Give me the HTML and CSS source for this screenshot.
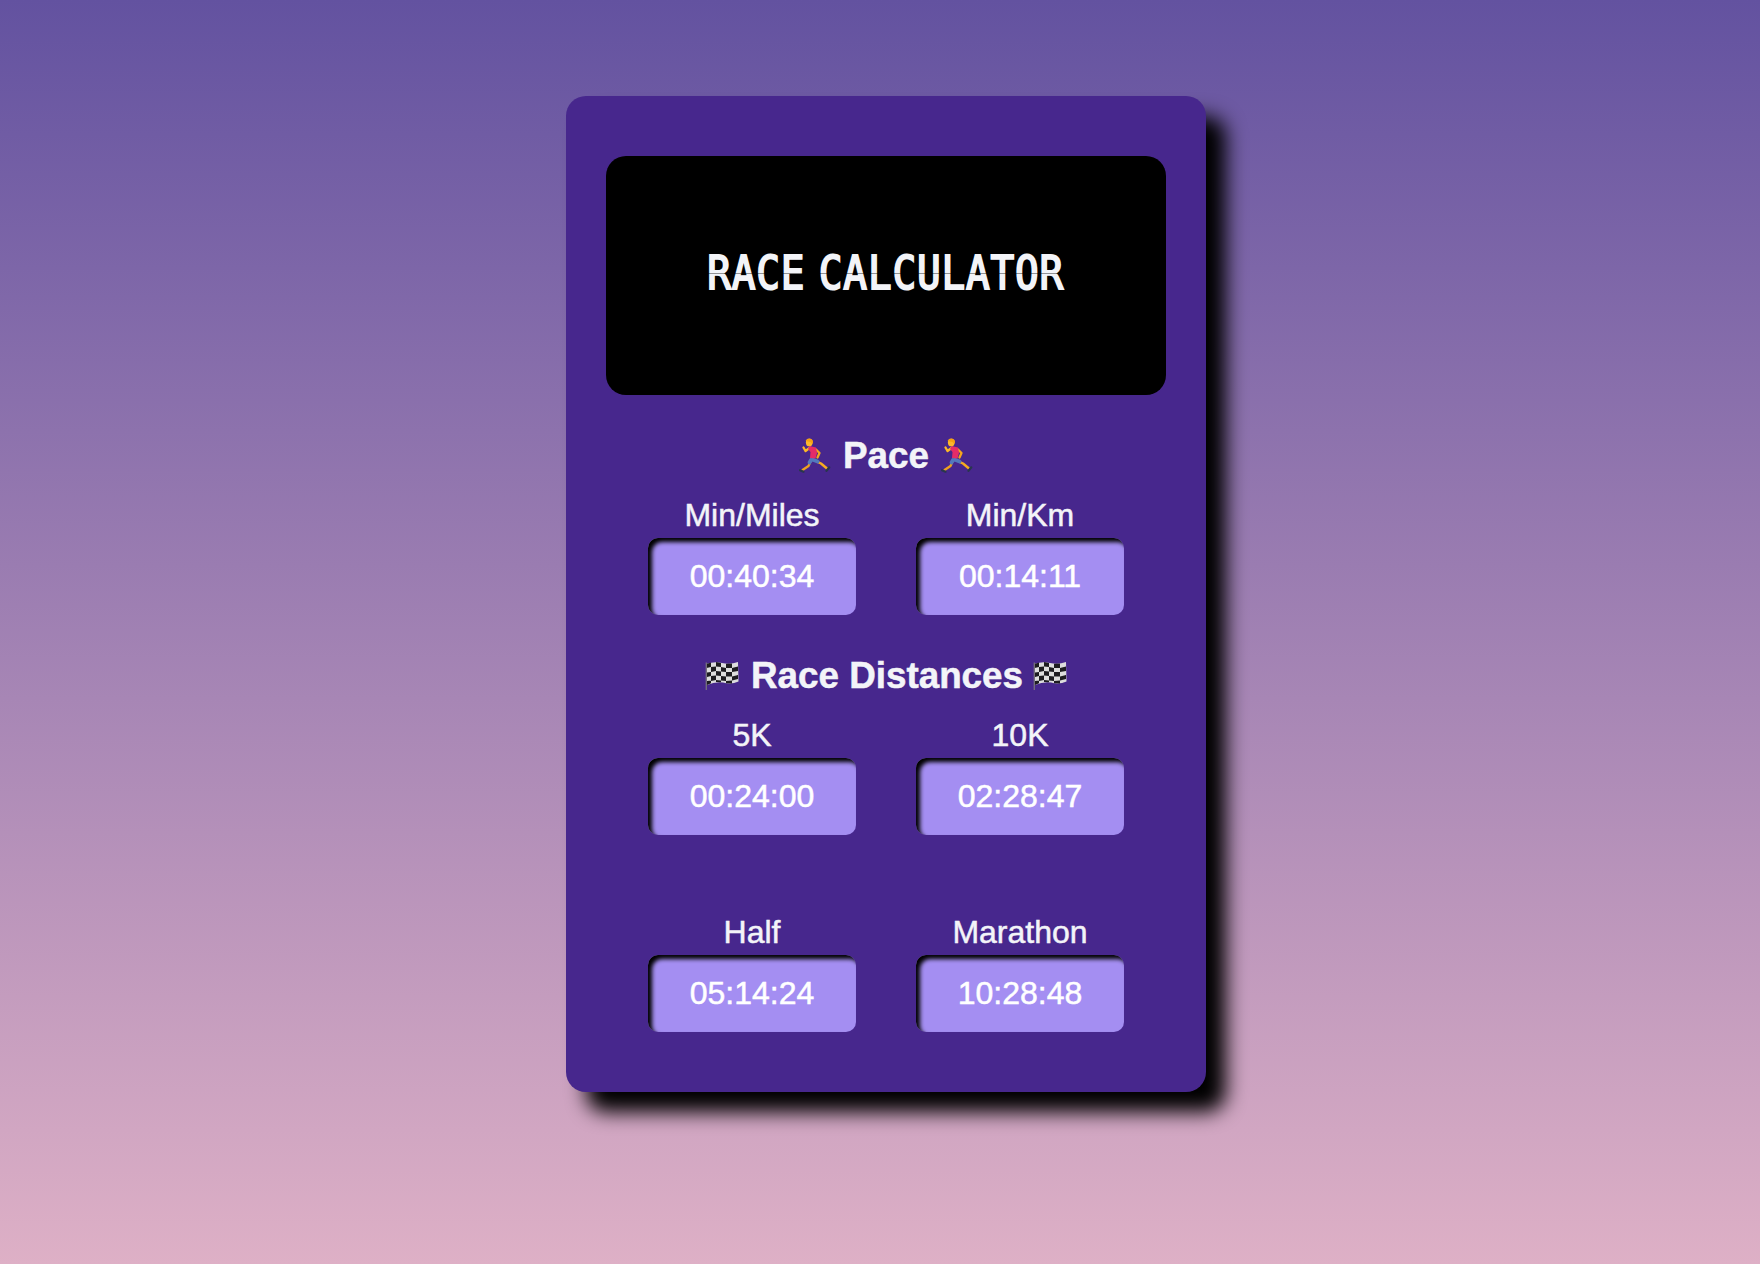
FILE: index.html
```html
<!DOCTYPE html>
<html lang="en">
<head>
<meta charset="utf-8">
<title>Race Calculator</title>
<link rel="stylesheet" href="styles.css">
</head>
<body>
<svg class="symbols" aria-hidden="true">
  <symbol id="runner" viewBox="0 0 32 36">
    <g fill="none" stroke-linecap="round" stroke-linejoin="round">
      <path d="M17 11.500L20.500 15L18.500 19.500" stroke="#f5a51d" stroke-width="2.300"/>
      <path d="M11.500 23.500L9.500 28L3.500 32" stroke="#efa11e" stroke-width="2.300"/>
      <path d="M18 23.700L22 25.500L28 30.500" stroke="#f6ac20" stroke-width="2.400"/>
      <path d="M12 22L10.500 24.500M14 21.800L18.500 23.500" stroke="#5378bd" stroke-width="3.800"/>
      <path d="M10.500 10L6.500 13L4.500 9.500" stroke="#fbb827" stroke-width="2.300"/>
      <path d="M1 32.200L4.500 33.700M27.500 32.800L30.300 29.300" stroke="#29364d" stroke-width="2.200"/>
    </g>
    <path d="M10.500 8L17 9.500L18 15L16.500 20.500L11 20L11.500 14L9 11Z" fill="#e52c68"/>
    <ellipse cx="10.200" cy="4.400" rx="3.300" ry="3.900" fill="#fcb72b"/>
    <path d="M6.500 3Q8 .300 12 1Q15 2 13.500 6L11.500 4Z" fill="#f5a112"/>
  </symbol>
  <symbol id="flag" viewBox="0 0 34 30">
    <path d="M1.500 3Q9 0 17 2Q25 4 33 1L33.500 20.500Q26 24 18 21.500Q10 20.500 2 24Z" fill="#ddd"/>
    <path d="M1.500 3L6 1.500V6L1.500 7ZM11 1L16 2V6L11 5.500ZM21 2.700L27 2.500V7L21 7ZM6 6L11 5.500V10L6 11ZM16 6L21 7V11L16 10.500ZM27 7L33 5.500V10L27 11ZM2 11.500L6 11V15L2 16ZM11 10L16 10.500V15L11 14.500ZM21 11L27 11V15.500L21 15.500ZM6 15L11 14.500V19L6 20ZM16 15L21 15.500V20L16 19.500ZM27 15.500L33 14V18L27 19.500ZM2 20L6 19.500V22.300L2 24ZM11 19L16 19.500V21.200L11 20.900ZM21 20L27 19.500V22.500L21 22.200Z" fill="#1d1c20"/>
    <path d="M1.300 1.500V29" stroke="#77717d" stroke-width="1.300"/>
  </symbol>
</svg>
<main class="calculator">
  <header class="screen"><h1 class="title">RACE CALCULATOR</h1></header>
  <h2 class="heading"><svg class="runner"><use href="#runner"/></svg><span>Pace</span><svg class="runner"><use href="#runner"/></svg></h2>
  <section class="row">
    <label class="field">Min/Miles<input class="time" value="00:40:34"></label>
    <label class="field">Min/Km<input class="time" value="00:14:11"></label>
  </section>
  <h2 class="heading"><svg class="flag"><use href="#flag"/></svg><span>Race Distances</span><svg class="flag"><use href="#flag"/></svg></h2>
  <section class="row">
    <label class="field">5K<input class="time" value="00:24:00"></label>
    <label class="field">10K<input class="time" value="02:28:47"></label>
  </section>
  <section class="row row-long">
    <label class="field">Half<input class="time" value="05:14:24"></label>
    <label class="field">Marathon<input class="time" value="10:28:48"></label>
  </section>
</main>
</body>
</html>
```
FILE: styles.css
```css
* { box-sizing: border-box; }
html { height: 100%; }
body {
  margin: 0;
  min-height: 100%;
  padding-top: 96px;
  padding-left: 12px;
  background: linear-gradient(#6352a0, #deb0c6);
  color: #f3f4f8;
  font: 32px/38px "Liberation Sans", Arial, sans-serif;
  -webkit-text-stroke: .5px currentColor;
}
.symbols { display: none; }
.calculator {
  width: 640px;
  height: 996px;
  margin: 0 auto;
  padding: 60px 40px;
  border-radius: 20px;
  background: #47278d;
  box-shadow: 20px 20px 20px #000;
}
.screen {
  display: flex;
  align-items: center;
  justify-content: center;
  height: 239px;
  margin-bottom: 39px;
  padding-bottom: 5px;
  border-radius: 20px;
  background: #000;
}
.title {
  position: relative;
  flex: none;
  margin: 0;
  font: 46px/56px "DejaVu Sans Mono", monospace;
  -webkit-text-stroke: 2px #f3f4f8;
  letter-spacing: 1px;
  word-spacing: -13px;
  transform: scaleX(.855);
  white-space: nowrap;
}
/* Hairline break between the upper and lower display segments */
.title::after {
  content: "";
  position: absolute;
  left: 0;
  right: 0;
  top: 28px;
  height: 1px;
  background: rgba(0, 0, 0, .4);
}
.heading {
  display: flex;
  align-items: center;
  justify-content: center;
  gap: 12px;
  height: 44px;
  margin: 0 0 18px;
  font-size: 36.8px;
  line-height: 44px;
}
.runner { width: 32px; height: 36px; }
.flag { width: 34px; height: 30px; }
.flag:last-child { margin-left: -2px; }
.row {
  display: flex;
  justify-content: center;
  gap: 60px;
  margin-bottom: 39px;
}
.row-long { margin-top: 78px; margin-bottom: 0; }
.field {
  display: flex;
  flex-direction: column;
  width: 208px;
  text-align: center;
}
.time {
  width: 208px;
  height: 77px;
  margin-top: 4px;
  padding: 0;
  border: 0;
  border-radius: 10px;
  background: #a48ef2;
  box-shadow: inset 4px 4px 4px #000;
  color: #fff;
  font: inherit;
  text-align: center;
  -webkit-text-stroke: .5px #fff;
}
```
